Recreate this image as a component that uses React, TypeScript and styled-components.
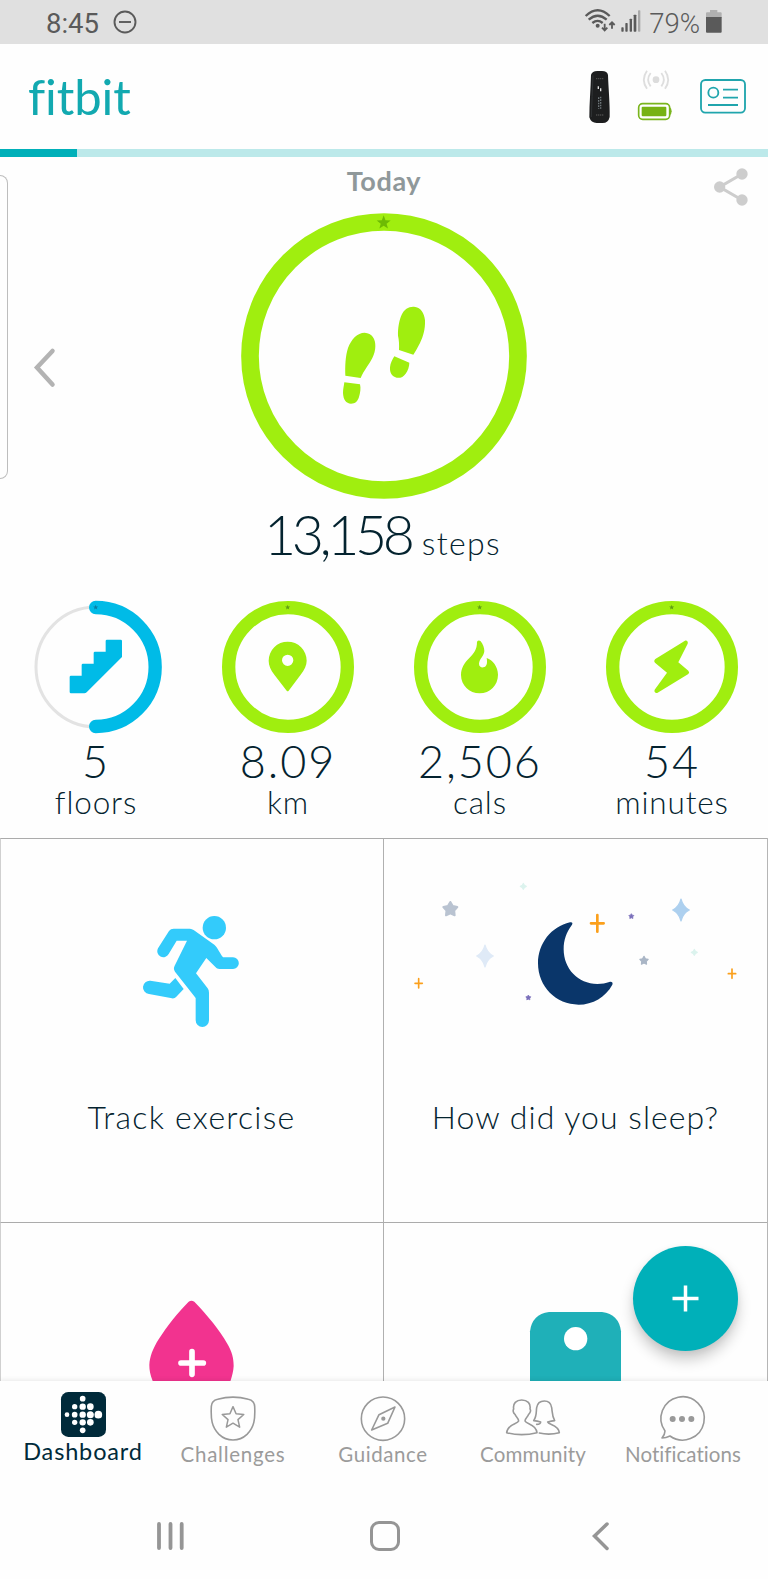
import React from "react";
import styled, { createGlobalStyle } from "styled-components";

const GREEN = "#a0ee0f";
const BLUE = "#00bbe7";
const TEAL = "#00b0b9";
const INK = "#04232f";
const GREY = "#959595";

const GlobalStyle = createGlobalStyle`
  * { box-sizing: border-box; }
  body { margin: 0; background: #fff; }
  svg { display: block; flex: none; overflow: visible; }
`;

const Screen = styled.div`
  position: relative;
  display: flex;
  flex-direction: column;
  width: 768px;
  height: 1579px;
  overflow: hidden;
  background: #fefefe;
  color: ${INK};
  font-family: Lato, "Liberation Sans", sans-serif;
  font-weight: 300;
  font-variant-ligatures: none;
  white-space: nowrap;
`;

/* ---------- status bar ---------- */
const StatusBar = styled.div`
  display: flex;
  justify-content: space-between;
  height: 44px;
  padding: 0 46px 0 46px;
  background: #e0e0e0;
  color: #5a5a5a;
  font-family: Roboto, sans-serif;
  font-weight: 400;
  font-size: 27.5px;
  line-height: 47px;
`;
const StatusGroup = styled.div<{ $gap: number }>`
  display: flex;
  align-items: flex-start;
  gap: ${(p) => p.$gap}px;
`;
const StatusIcon = styled.svg<{ $top: number }>`
  margin-top: ${(p) => p.$top}px;
`;
const Percent = styled.span`
  margin: 0 1px 0 3px;
  font-weight: 300;
`;

/* ---------- header ---------- */
const Header = styled.header`
  display: flex;
  justify-content: space-between;
  height: 105px;
  padding: 0 22px 0 28px;
`;
const Logo = styled.div`
  margin-top: 22px;
  color: #12a9b0;
  font-weight: 400;
  font-size: 49px;
  line-height: 60px;
  letter-spacing: -0.1px;
`;
const DeviceRow = styled.div`
  display: flex;
  align-items: flex-start;
`;
const DeviceStatus = styled.div`
  display: flex;
  flex-direction: column;
  gap: 13px;
  margin: 26px 28px 0 28px;
`;
const SyncSlot = styled.div`
  margin-left: 5px;
`;
const ProgressTrack = styled.div`
  height: 8px;
  flex: none;
  background: #bce9ea;
`;
const ProgressFill = styled.div`
  width: 76.5px;
  height: 100%;
  background: ${TEAL};
`;

/* ---------- today ---------- */
const Today = styled.section`
  display: grid;
  grid-template-columns: 1fr 290px 1fr;
  height: 406px;
`;
const LeftSide = styled.div`
  display: flex;
  gap: 26px;
`;
const PeekCard = styled.div`
  width: 8px;
  height: 304px;
  margin-top: 17.5px;
  border: 1px solid #bdbdbd;
  border-left: 0;
  border-radius: 0 9px 9px 0;
`;
const PreviousDay = styled.svg`
  margin-top: 191px;
`;
const Centre = styled.div`
  display: flex;
  flex-direction: column;
  align-items: center;
  padding-top: 4px;
`;
const DayTitle = styled.h1`
  margin: 0 0 12px;
  color: #8f989a;
  font-weight: 700;
  font-size: 27px;
  line-height: 40px;
  letter-spacing: 0.6px;
`;
const StepLine = styled.div`
  display: flex;
  align-items: baseline;
  gap: 11px;
  margin: 4.5px 3px 0 0;
  line-height: 60px;
`;
const StepCount = styled.span`
  font-size: 55.5px;
  letter-spacing: -4.4px;
`;
const StepUnit = styled.span`
  font-size: 32px;
  letter-spacing: 1.4px;
`;
const RightSide = styled.div`
  display: flex;
  justify-content: flex-end;
  padding: 10.5px 20.5px 0 0;
`;

/* ---------- stats ---------- */
const Stats = styled.section`
  display: grid;
  grid-template-columns: repeat(4, 192px);
  height: 275px;
  padding-top: 38px;
`;
const Stat = styled.div`
  display: flex;
  flex-direction: column;
  align-items: center;
`;
const StatValue = styled.div`
  margin-top: 6px;
  font-size: 45px;
  line-height: 44px;
  letter-spacing: 1.9px;
`;
const StatLabel = styled.div`
  font-size: 31.5px;
  line-height: 39px;
  letter-spacing: 0.85px;
`;

/* ---------- tiles ---------- */
const Tiles = styled.section`
  display: grid;
  grid-template-columns: 383px 384px;
  grid-template-rows: 384px 159px;
  height: 543px;
  overflow: hidden;
  border-right: 1px solid #b5b5b5;
`;
const Tile = styled.div<{ $top: number; $first?: boolean }>`
  display: flex;
  flex-direction: column;
  align-items: center;
  overflow: hidden;
  padding-top: ${(p) => p.$top}px;
  padding-right: ${(p) => (p.$first ? 1 : 0)}px;
  border-top: 1px solid #ababab;
  border-left: 1px solid ${(p) => (p.$first ? "#d0d0d0" : "#b0b0b0")};
`;
const TileLabel = styled.div<{ $gap: number; $spacing: number }>`
  margin-top: ${(p) => p.$gap}px;
  font-size: 32px;
  line-height: 40px;
  letter-spacing: ${(p) => p.$spacing}px;
`;
const Fab = styled.button`
  position: absolute;
  left: 633px;
  top: 1246px;
  display: flex;
  align-items: center;
  justify-content: center;
  width: 105px;
  height: 105px;
  padding: 0;
  border: 0;
  border-radius: 50%;
  background: ${TEAL};
  box-shadow: 0 9px 14px rgba(0, 0, 0, 0.2), 0 2px 6px rgba(0, 0, 0, 0.06);
`;

/* ---------- bottom navigation ---------- */
const BottomNav = styled.nav`
  position: relative;
  display: grid;
  grid-template-columns: repeat(5, 150px);
  height: 110px;
  padding-left: 8px;
  background: #fefefe;
  box-shadow: 0 -1px 5px rgba(0, 0, 0, 0.09);
`;
const NavItem = styled.a<{ $active?: boolean }>`
  display: flex;
  flex-direction: column;
  align-items: center;
  padding-top: ${(p) => (p.$active ? 11 : 14.5)}px;
  color: ${(p) => (p.$active ? "#002a3a" : "#9b9b9b")};
  font-weight: 400;
  font-size: ${(p) => (p.$active ? 23.5 : 20.5)}px;
  line-height: 30px;
`;
const NavLabel = styled.span<{ $spacing: number; $gap: number }>`
  margin-top: ${(p) => p.$gap}px;
  letter-spacing: ${(p) => p.$spacing}px;
`;
const SystemNav = styled.div`
  position: relative;
  display: flex;
  align-items: flex-start;
  height: 88px;
  padding: 30px 0 0 157px;
  background: #fefefe;
`;
const HomeKey = styled.div`
  width: 30px;
  height: 30px;
  margin: 0 192px 0 186px;
  border: 3.5px solid ${GREY};
  border-radius: 9px;
`;

const starPoints = (cx: number, cy: number, r: number, inner = 0.42) =>
  Array.from({ length: 10 }, (_, i) => {
    const a = (Math.PI / 5) * i - Math.PI / 2;
    const d = i % 2 ? r * inner : r;
    return `${(cx + d * Math.cos(a)).toFixed(1)},${(cy + d * Math.sin(a)).toFixed(1)}`;
  }).join(" ");

const Star = ({ x, y, r, fill }: { x: number; y: number; r: number; fill: string }) => (
  <polygon points={starPoints(x, y, r, 0.55)} fill={fill} stroke={fill} strokeWidth={r * 0.28} strokeLinejoin="round" />
);
const Sparkle = ({ x, y, w, h, fill }: { x: number; y: number; w: number; h: number; fill: string }) => (
  <path
    d={`M${x} ${y - h}Q${x + w * 0.25} ${y - h * 0.25} ${x + w} ${y}Q${x + w * 0.25} ${y + h * 0.25} ${x} ${y + h}Q${x - w * 0.25} ${y + h * 0.25} ${x - w} ${y}Q${x - w * 0.25} ${y - h * 0.25} ${x} ${y - h}Z`}
    fill={fill}
    stroke={fill}
    strokeWidth="3.500"
    strokeLinejoin="round"
  />
);
const Plus = ({ x, y, w, h, s }: { x: number; y: number; w: number; h: number; s: number }) => (
  <path d={`M${x - w} ${y}H${x + w}M${x} ${y - h}V${y + h}`} stroke="#fba01c" strokeWidth={s} strokeLinecap="round" />
);

const StepsRing = () => (
  <svg width="286" height="286" viewBox="63 40 858 858">
    <circle cx="492" cy="469" r="402" fill="none" stroke={GREEN} strokeWidth="53" />
    <polygon points={starPoints(491, 69, 22)} fill="#6dba04" />
    <g fill={GREEN}>
      <path d="M376 528C375 500 376 470 384 445C394 418 412 399 434 399C456 400 467 418 466 440C466 465 452 486 440 503C432 515 426 525 422 535Z" />
      <path d="M373 548L420 554C423 565 421 580 417 592C413 605 406 612 393 612C378 611 370 600 369 580C369 568 372 558 373 548Z" />
      <path d="M537 451C538 435 537 420 534 408C533 385 538 360 545 345C553 328 566 320 582 321C602 322 613 340 615 362C616 390 609 412 600 430C593 444 586 456 580 465Z" />
      <path d="M523 470L568 489C568 500 564 512 557 522C550 532 540 536 530 534C515 531 509 519 510 503C511 490 517 480 523 470Z" />
    </g>
  </svg>
);

const FullRing = ({ children }: { children: React.ReactNode }) => (
  <svg width="132" height="132" viewBox="90 32 396 396">
    <circle cx="288" cy="230" r="178" fill="none" stroke={GREEN} strokeWidth="40" />
    <polygon points={starPoints(287, 51, 8)} fill="#5f9d14" />
    <g fill={GREEN}>{children}</g>
  </svg>
);

const FloorsRing = () => (
  <svg width="132" height="132" viewBox="90 32 396 396">
    <path d="M288 50A180 180 0 0 0 288 410" fill="none" stroke="#e3e3e3" strokeWidth="9" />
    <path d="M287 51.5A178.500 178.500 0 0 1 287 408.500" fill="none" stroke={BLUE} strokeWidth="40" strokeLinecap="round" />
    <polygon points={starPoints(287, 51, 8)} fill="#0a7ea4" />
    <path
      fill={BLUE}
      d="M213 256H245V224Q245 220 249 220H281V188Q281 184 285 184H317V152Q317 148 321 148H362Q366 148 366 152V200L260 306Q257 309 253 309H213Q209 309 209 305V260Q209 256 213 256Z"
    />
  </svg>
);

const stats = [
  { value: "5", label: "floors", ring: <FloorsRing /> },
  {
    value: "8.09",
    label: "km",
    ring: (
      <FullRing>
        <path
          fillRule="evenodd"
          d="M284 301L247 253C236 238 230 226 230 211A57 57 0 0 1 344 211C344 226 337 238 326 253L290 301Q287 305 284 301ZM287 193A17 17 0 1 0 287 227A17 17 0 1 0 287 193Z"
        />
      </FullRing>
    ),
  },
  {
    value: "2,506",
    label: "cals",
    ring: (
      <FullRing>
        <path d="M279 154Q284 147 290 153C297 162 301 172 301 182C300 198 286 205 285 220C285 229 292 232 298 231C308 229 311 220 308 203C326 208 342 230 342 253C342 285 318 309 287 309C256 309 231 285 231 254C231 232 242 217 256 203C270 188 279 178 279 154Z" />
      </FullRing>
    ),
  },
  {
    value: "54",
    label: "minutes",
    ring: (
      <FullRing>
        <path d="M327 151C333 149 337 155 335 160L307 216L337 241Q342 246 337 251L245 307C239 310 233 304 236 298L273 247L237 217Q232 212 238 206Z" />
      </FullRing>
    ),
  },
];

const WifiIcon = () => (
  <StatusIcon $top={8} width="31" height="25" viewBox="600 25 93 75">
    <g fill="none" stroke="#5a5a5a" strokeWidth="7">
      <path d="M602 49Q638 14 674 49" />
      <path d="M611 60Q638 36 665 60" />
      <path d="M622 70Q638 57 653 70" />
    </g>
    <circle cx="638" cy="78" r="6" fill="#5a5a5a" />
    <g fill="none" stroke="#5a5a5a" strokeWidth="5.500">
      <path d="M659 72V92M651 84L659 92L667 84" />
      <path d="M681 87V69M673 76L681 68L689 76" />
    </g>
  </StatusIcon>
);
const SignalIcon = () => (
  <StatusIcon $top={10} width="20" height="22" viewBox="707 31 60 66">
    <g fill="#5a5a5a">
      <rect x="708" y="83" width="7" height="13" rx="2" />
      <rect x="720" y="70" width="7" height="26" rx="2" />
      <rect x="733" y="57" width="7" height="39" rx="2" />
      <rect x="745" y="45" width="8" height="51" rx="2" />
    </g>
    <rect x="758" y="32" width="7" height="64" rx="2" fill="#a8a8a8" />
  </StatusIcon>
);
const PhoneBattery = () => (
  <StatusIcon $top={10} width="16" height="23" viewBox="967 30 48 69">
    <path d="M979 30H1001V37H1011Q1014 37 1014 40V54H967V40Q967 37 970 37H979Z" fill="#b0b0b0" />
    <path d="M967 51H1014V95Q1014 98 1011 98H970Q967 98 967 95Z" fill="#5a5a5a" />
  </StatusIcon>
);

const Tracker = () => (
  <StatusIcon $top={27} width="21" height="52" viewBox="615 212 63 156">
    <path
      d="M621 224Q624 212 640 212H654Q670 212 672 224C673 260 678 310 677 350Q673 368 656 368H638Q621 368 616 351C616 310 620 265 621 224Z"
      fill="#1d1e1f"
    />
    <path d="M627 225Q624 290 622 350" stroke="#303335" strokeWidth="3" fill="none" />
    <path d="M636 235H658M636 344H658" stroke="#4a4a4a" strokeWidth="4" strokeDasharray="4 2" />
    <path d="M643 258V266M650 264V273" stroke="#ddd" strokeWidth="4" />
    <path d="M644 291V325M650 289V325" stroke="#6d7579" strokeWidth="4" strokeDasharray="5 3" />
  </StatusIcon>
);
const SyncIcon = () => (
  <svg width="26" height="20" viewBox="777 211 78 60">
    <circle cx="816" cy="240" r="10" fill="#dcdcdc" />
    <g fill="none" stroke="#dedede" strokeWidth="5.500">
      <path d="M800 220Q785 240 800 260M832 220Q847 240 832 260" />
      <path d="M789 213Q770 240 789 267M843 213Q862 240 843 267" />
    </g>
  </svg>
);
const TrackerBattery = () => (
  <svg width="34" height="17" viewBox="762 309 102 51">
    <rect x="764" y="311" width="93" height="47" rx="12" fill="#fff" stroke="#7ab51d" strokeWidth="5" />
    <rect x="773" y="320" width="74" height="29" rx="3" fill="#77b214" />
    <path d="M857 322Q863 325 863 334Q863 343 857 346Z" fill="#7ab51d" />
  </svg>
);
const AccountCard = () => (
  <StatusIcon $top={35} width="46" height="35" viewBox="948 237 138 105">
    <g fill="none" stroke="#20a5ad" strokeWidth="5.500">
      <rect x="951" y="240" width="132" height="98" rx="13" />
      <circle cx="988" cy="278" r="15" />
      <path d="M1017 269H1062M1017 293H1062M972 315H1062" />
    </g>
  </StatusIcon>
);
const ShareIcon = () => (
  <svg width="34" height="38" viewBox="989 502 102 114">
    <path d="M1073 520L1006 559L1073 598" fill="none" stroke="#cdcdcd" strokeWidth="9.500" />
    <g fill="#cdcdcd">
      <circle cx="1073" cy="520" r="17" />
      <circle cx="1006" cy="559" r="17" />
      <circle cx="1073" cy="598" r="17" />
    </g>
  </svg>
);

const Runner = () => (
  <svg width="97" height="113" viewBox="130 105 291 339">
    <g fill="#33cbfb">
      <circle cx="344" cy="143" r="35" />
      <path d="M222 146H270C276 146 281 149 285 152L344 194C352 201 357 213 370 232H400A17.500 17.500 0 0 1 400 267H359C354 267 351 265 348 262L320 234L289 280L324 325Q328 330 328 338V421A20 20 0 0 1 288 421V354L226 275Q220 267 225 257L262 182H231L207 222A18 18 0 0 1 175 205L208 153Q213 146 222 146Z" />
      <path d="M152 302L210 311L227 294L252 327L230 350Q225 356 217 355L148 342A20 20 0 0 1 152 302Z" />
    </g>
  </svg>
);

const NightSky = () => (
  <svg width="330" height="127" viewBox="79 60 990 381">
    <path
      fill="#0a366a"
      d="M556 187C562 185 566 189 561 196C545 217 537 240 537 268C537 326 580 372 638 372C652 372 664 369 674 366C681 364 686 368 683 374C663 411 624 434 582 434C514 434 460 380 460 310C460 250 500 200 556 187Z"
    />
    <Star x={197} y={148} r={22} fill="#b9c3d1" />
    <Star x={778} y={302} r={13} fill="#aab6c6" />
    <Star x={740} y={169} r={8} fill="#7a6fba" />
    <Star x={431} y={413} r={8} fill="#7a6fba" />
    <Sparkle x={889} y={150} w={25} h={33} fill="#add0ef" />
    <Sparkle x={301} y={288} w={25} h={33} fill="#dfeaf7" />
    <Sparkle x={416} y={79} w={9} h={9} fill="#dcf3ee" />
    <Sparkle x={929} y={277} w={9} h={9} fill="#dcf3ee" />
    <Plus x={638} y={190} w={19} h={25} s={8} />
    <Plus x={102} y={370} w={11} h={14} s={5} />
    <Plus x={1042} y={341} w={11} h={14} s={5} />
  </svg>
);

const Drop = () => (
  <svg width="85" height="82" viewBox="446 270 255 246">
    <path
      fill="#f2338f"
      d="M565 275Q573 269 582 275C620 315 660 362 680 400C695 425 700 445 700 468C699 485 695 500 688 520H460C450 497 447 482 447 465C448 440 458 415 475 388C500 348 535 305 565 275Z"
    />
    <path d="M542 459H609M575 425V493" stroke="#fff" strokeWidth="17" strokeLinecap="round" />
  </svg>
);
const WeightScale = () => (
  <svg width="91" height="70" viewBox="437 305 273 210">
    <path d="M437 520V363Q443 312 494 305H653Q704 312 710 363V520Z" fill="#1fb0b8" />
    <circle cx="574" cy="385" r="35" fill="#fff" />
  </svg>
);

const dots = [
  [248, 566, 8.5], [224, 590, 8], [248, 590, 9.5], [271, 590, 10],
  [201, 614, 7], [224, 614, 8.5], [248, 614, 9.5], [271, 614, 10.5], [295, 614, 11.5],
  [224, 637, 8], [248, 637, 9.5], [271, 637, 10], [248, 661, 8.5],
];
const DashboardIcon = () => (
  <svg width="45" height="45" viewBox="183 546 135 135">
    <rect x="183" y="546" width="135" height="135" rx="22" fill="#002a3a" />
    {dots.map(([x, y, r]) => (
      <circle key={`${x}-${y}`} cx={x} cy={y} r={r} fill="#fff" />
    ))}
  </svg>
);
const lineIcon = { fill: "none", stroke: "#999", strokeWidth: 4.8, strokeLinejoin: "round" as const, strokeLinecap: "round" as const };
const ShieldIcon = () => (
  <svg width="46" height="45" viewBox="629 556 138 135" {...lineIcon}>
    <path d="M652 566Q698 553 744 566Q762 570 763 587C765 625 762 649 740 671Q722 688 698 688Q674 688 656 671C634 649 631 625 633 587Q634 570 652 566Z" />
    <polygon points={starPoints(698, 622, 34, 0.46)} strokeWidth="4.500" />
  </svg>
);
const CompassIcon = () => (
  <svg width="46" height="45" viewBox="1079 556 138 135" {...lineIcon}>
    <circle cx="1148" cy="624" r="65" />
    <path d="M1114 658L1136 612L1184 589L1162 638Z" />
    <circle cx="1149" cy="624" r="4" fill="#999" />
  </svg>
);
const PeopleIcon = () => (
  <svg width="54" height="45" viewBox="366 558 162 135" {...lineIcon}>
    <path d="M404 633C403 623 396 622 393 613C386 608 387 600 389 597C386 580 397 570 413 570C430 570 441 580 438 597C441 600 440 608 434 613C431 622 424 623 423 633C427 643 456 641 459 668Q436 674 413 674Q390 674 368 668C371 641 400 643 404 633Z" />
    <path d="M458 643Q470 643 470 636Q460 633 449 632C459 618 456 605 458 593Q461 573 481 573Q500 573 503 593C505 605 504 618 512 632Q502 633 491 636C493 645 523 644 526 668Q496 676 466 669" />
  </svg>
);
const ChatIcon = () => (
  <svg width="46" height="45" viewBox="830 558 138 135" {...lineIcon}>
    <path d="M845 663A65 65 0 1 1 860 678Q848 684 836 684Q845 673 845 663Z" />
    <g fill="#999" stroke="none">
      <circle cx="868" cy="627" r="9" />
      <circle cx="896" cy="627" r="9" />
      <circle cx="924" cy="627" r="9" />
    </g>
  </svg>
);

const navItems = [
  { label: "Dashboard", icon: <DashboardIcon />, spacing: 0.85 },
  { label: "Challenges", icon: <ShieldIcon />, spacing: 0.75 },
  { label: "Guidance", icon: <CompassIcon />, spacing: 0.6 },
  { label: "Community", icon: <PeopleIcon />, spacing: 0.15 },
  { label: "Notifications", icon: <ChatIcon />, spacing: 0.05 },
];

export default function App() {
  return (
    <Screen>
      <GlobalStyle />
      <StatusBar>
        <StatusGroup $gap={14}>
          <span>8:45</span>
          <StatusIcon $top={10} width="24" height="24" viewBox="0 0 24 24" fill="none" stroke="#5a5a5a" strokeWidth="1.900">
            <circle cx="12" cy="12" r="10.500" />
            <path d="M6 12H18" />
          </StatusIcon>
        </StatusGroup>
        <StatusGroup $gap={5}>
          <WifiIcon />
          <SignalIcon />
          <Percent>79%</Percent>
          <PhoneBattery />
        </StatusGroup>
      </StatusBar>

      <Header>
        <Logo>fitbit</Logo>
        <DeviceRow>
          <Tracker />
          <DeviceStatus>
            <SyncSlot>
              <SyncIcon />
            </SyncSlot>
            <TrackerBattery />
          </DeviceStatus>
          <AccountCard />
        </DeviceRow>
      </Header>
      <ProgressTrack>
        <ProgressFill />
      </ProgressTrack>

      <Today>
        <LeftSide>
          <PeekCard />
          <PreviousDay width="22" height="40" viewBox="0 0 22 40">
            <path d="M18.500 3L3 19.500L18.500 36.500" fill="none" stroke="#b3b3b3" strokeWidth="4.500" strokeLinecap="round" />
          </PreviousDay>
        </LeftSide>
        <Centre>
          <DayTitle>Today</DayTitle>
          <StepsRing />
          <StepLine>
            <StepCount>13,158</StepCount>
            <StepUnit>steps</StepUnit>
          </StepLine>
        </Centre>
        <RightSide>
          <ShareIcon />
        </RightSide>
      </Today>

      <Stats>
        {stats.map((s) => (
          <Stat key={s.label}>
            {s.ring}
            <StatValue>{s.value}</StatValue>
            <StatLabel>{s.label}</StatLabel>
          </Stat>
        ))}
      </Stats>

      <Tiles>
        <Tile $top={76} $first>
          <Runner />
          <TileLabel $gap={69} $spacing={1.25}>Track exercise</TileLabel>
        </Tile>
        <Tile $top={41}>
          <NightSky />
          <TileLabel $gap={90} $spacing={1.05}>How did you sleep?</TileLabel>
        </Tile>
        <Tile $top={77} $first>
          <Drop />
        </Tile>
        <Tile $top={89}>
          <WeightScale />
        </Tile>
      </Tiles>

      <Fab aria-label="Add">
        <svg width="27" height="27" viewBox="0 0 27 27">
          <path d="M0.500 13.500H26.500M13.500 0.500V26.500" stroke="#fff" strokeWidth="3.500" />
        </svg>
      </Fab>

      <BottomNav>
        {navItems.map((n, i) => (
          <NavItem key={n.label} $active={i === 0}>
            {n.icon}
            <NavLabel $spacing={n.spacing} $gap={i === 0 ? -1 : -1.5}>{n.label}</NavLabel>
          </NavItem>
        ))}
      </BottomNav>
      <SystemNav>
        <svg width="27" height="29" viewBox="0 0 27 29">
          <path d="M2 3V27M13.500 3V27M24.700 3V27" stroke={GREY} strokeWidth="3.800" strokeLinecap="round" />
        </svg>
        <HomeKey />
        <svg width="17" height="30" viewBox="0 0 17 30">
          <path d="M15 3L2.500 15L15 27.500" fill="none" stroke={GREY} strokeWidth="3.500" strokeLinecap="round" />
        </svg>
      </SystemNav>
    </Screen>
  );
}
